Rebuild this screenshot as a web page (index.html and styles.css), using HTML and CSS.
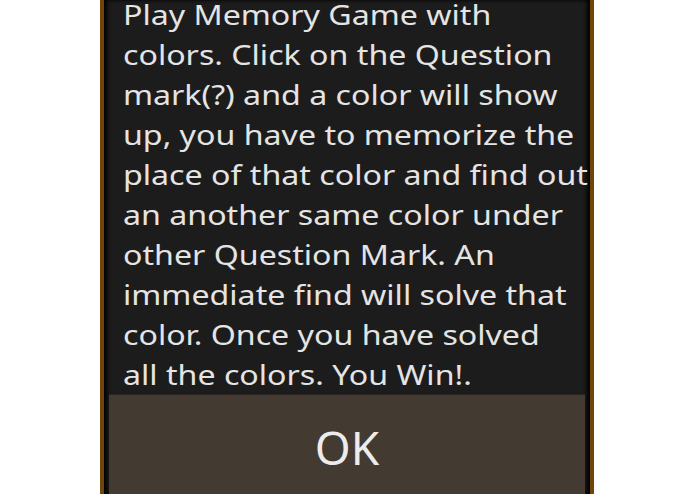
FILE: index.html
```html
<!DOCTYPE html>
<html lang="en">
<head>
    <meta charset="UTF-8">
    <meta name="viewport" content="width=device-width, initial-scale=1.0">
    <title>Memory Game - How to play</title>
    <link rel="stylesheet" href="styles.css">
</head>
<body>
    <div class="dialog">
        <div class="dialog-inner">
            <p class="message">Play Memory Game with<br>
                colors. Click on the Question<br>
                mark(?) and a color will show<br>
                up, you have to memorize the<br>
                place of that color and find out<br>
                an another same color under<br>
                other Question Mark. An<br>
                immediate find will solve that<br>
                color. Once you have solved<br>
                all the colors. You Win!.</p>
            <button class="ok-button" id="ok">OK</button>
        </div>
    </div>
</body>
</html>
```

FILE: styles.css
```css
html, body {
    margin: 0;
    padding: 0;
    background-color: #ffffff;
    height: 100%;
    overflow: hidden;
}
body {
    font-family: 'Noto Sans', 'Open Sans', sans-serif;
}
.dialog {
    width: 486px;
    margin-left: 100px;
    height: 100%;
    border-left: 4px solid #714409;
    border-right: 4px solid #714409;
}
.dialog-inner {
    height: 100%;
    background-color: #1c1c1c;
    box-shadow: inset 4px 0 4px -1px #000, inset -4px 0 4px -1px #000;
    display: flex;
    flex-direction: column;
}
.message {
    width: 400px;
    margin: -6px 0 0 19px;
    padding: 0;
    font-size: 28px;
    line-height: 40px;
    white-space: nowrap;
    color: #e4e4e4;
    transform: scaleX(1.148);
    transform-origin: left top;
}
.ok-button {
    display: block;
    flex: 1 0 110px;
    margin: 0 5px;
    padding: 0 0 6px 0;
    background-color: #433a31;
    color: #ececec;
    border: none;
    border-top: 1px solid #2a2520;
    font-family: 'Noto Sans', 'Open Sans', sans-serif;
    font-size: 46px;
    text-align: center;
    cursor: pointer;
}
```
